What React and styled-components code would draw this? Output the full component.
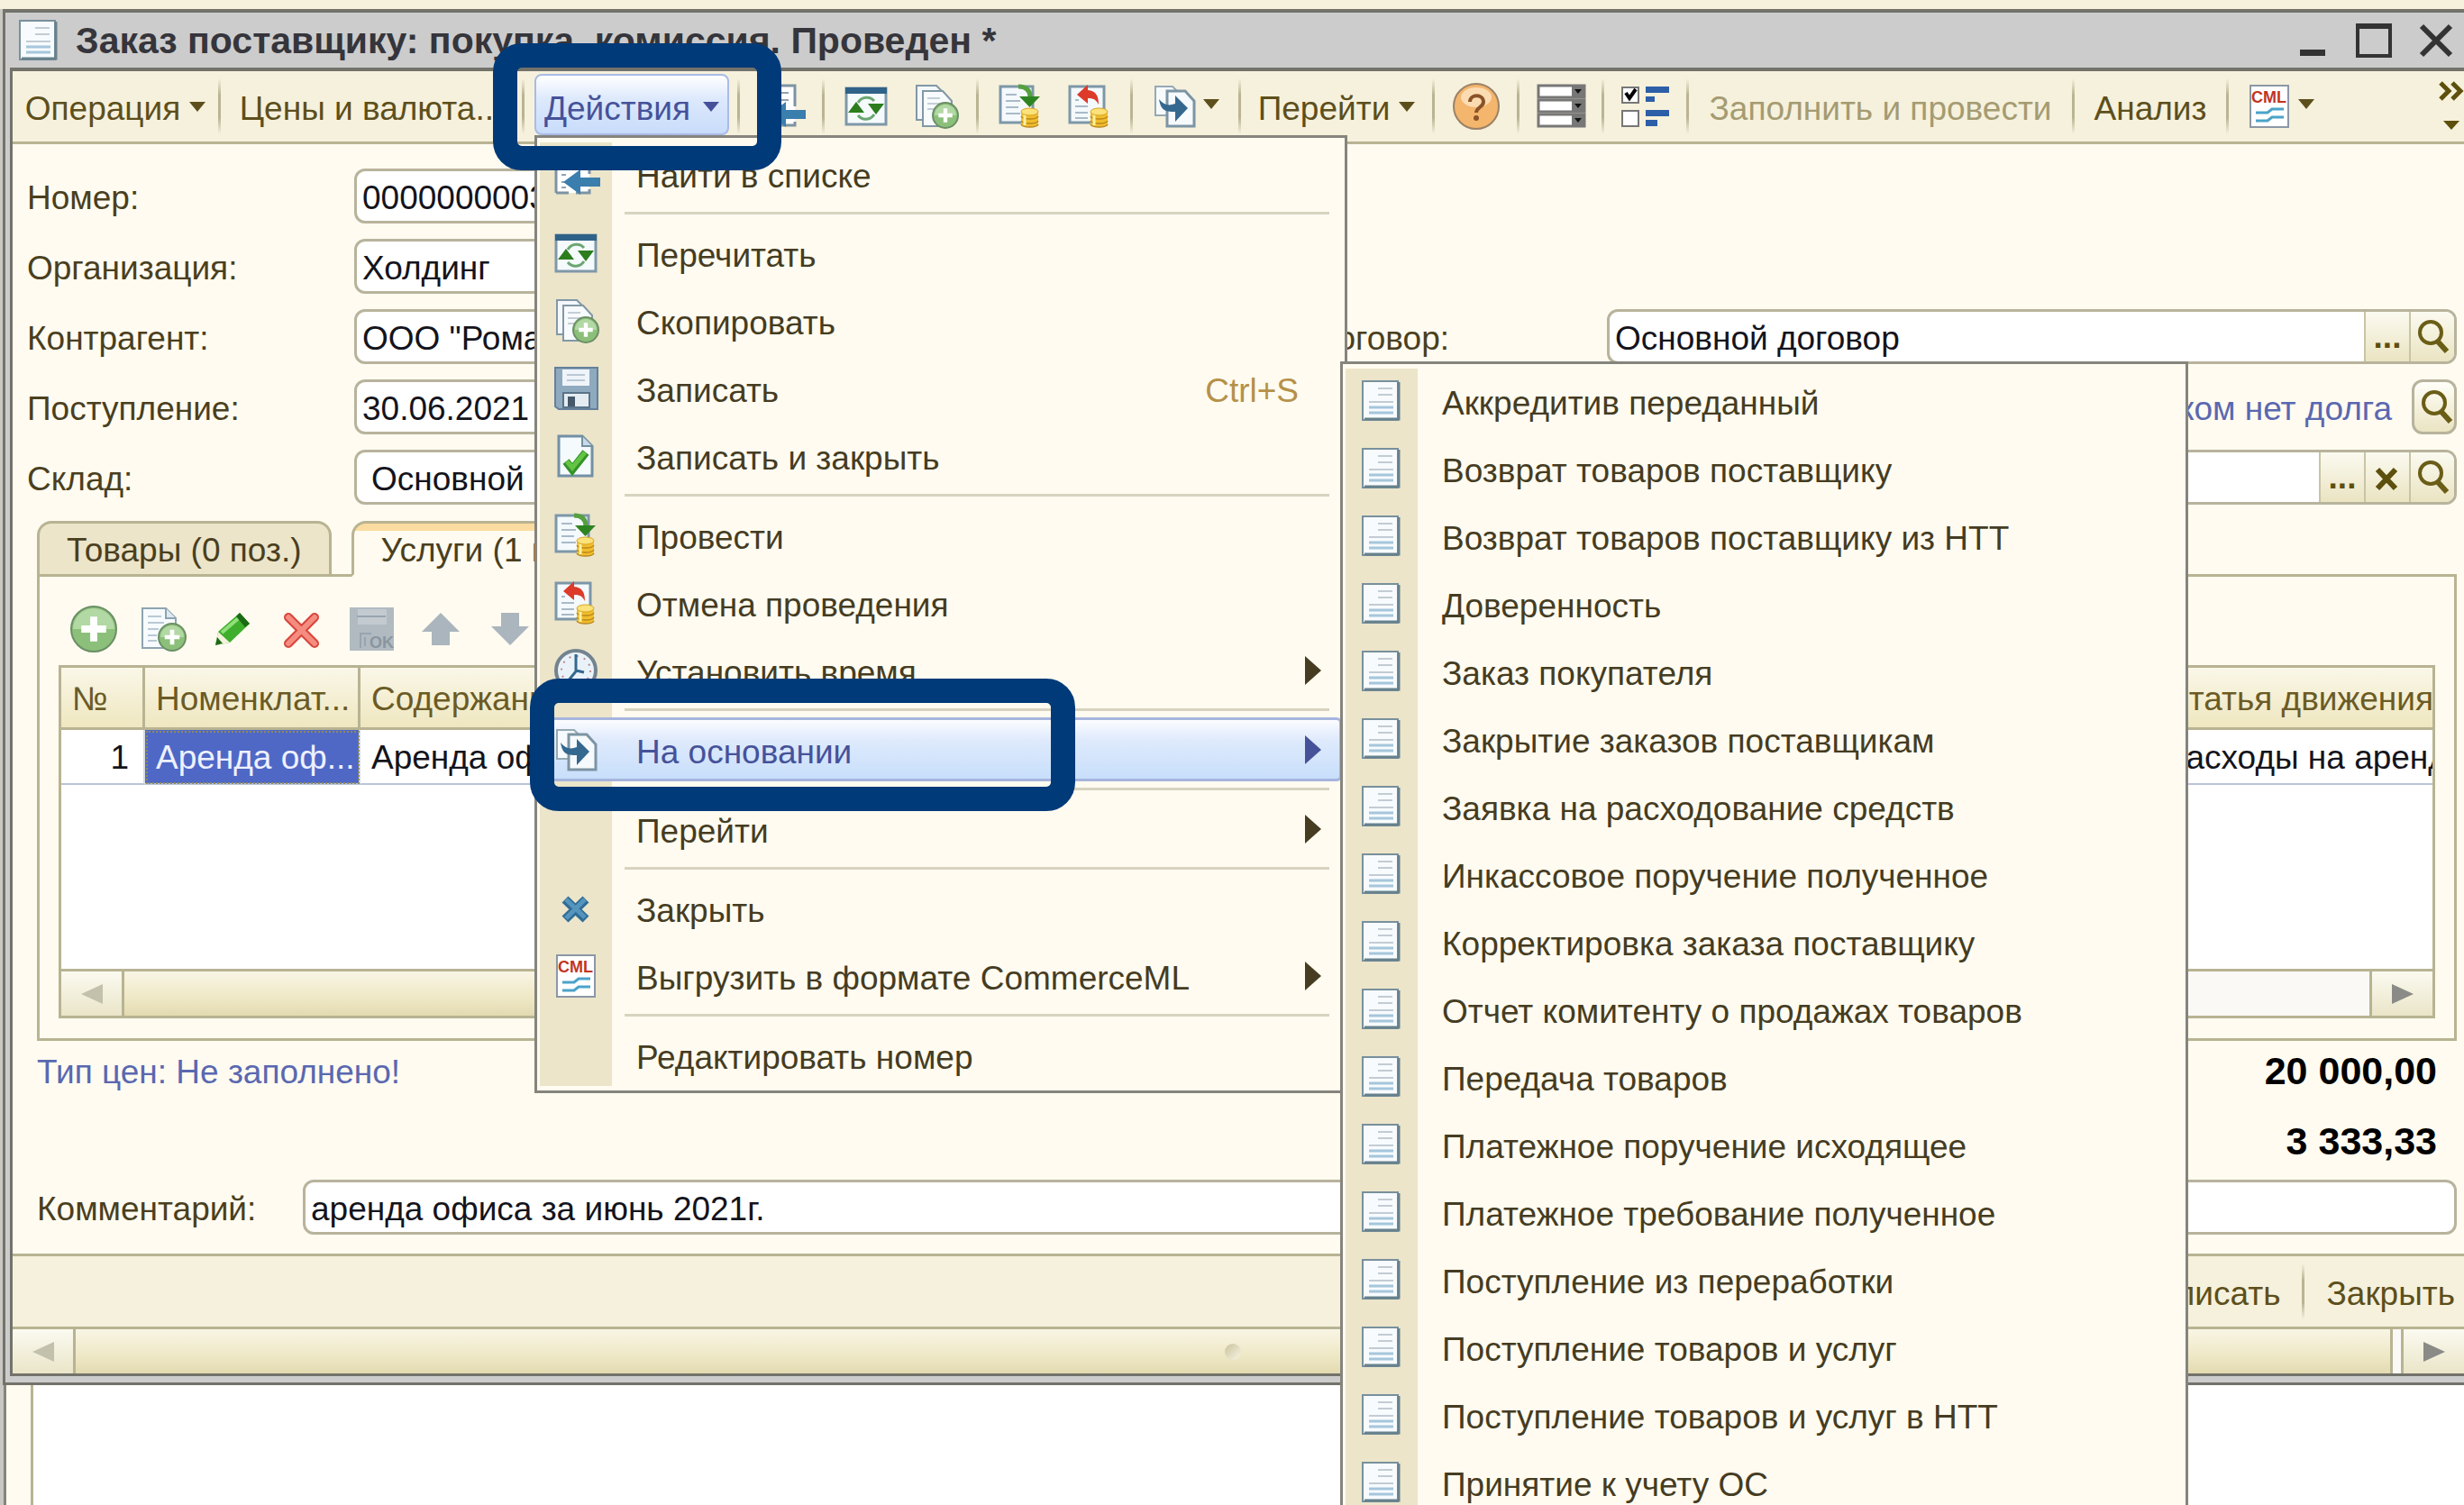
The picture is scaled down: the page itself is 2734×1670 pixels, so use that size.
import { Fragment, useId } from "react";
import { createGlobalStyle, styled } from "styled-components";

const menuItems = [
  { title: "Найти в списке", icon: "find" },
  { divider: true },
  { title: "Перечитать", icon: "refresh" },
  { title: "Скопировать", icon: "copy" },
  { title: "Записать", icon: "save", shortcut: "Ctrl+S" },
  { title: "Записать и закрыть", icon: "saveClose" },
  { divider: true },
  { title: "Провести", icon: "post" },
  { title: "Отмена проведения", icon: "unpost" },
  { title: "Установить время", icon: "clock", arrow: true },
  { divider: true },
  { title: "На основании", icon: "based", arrow: true, active: true },
  { divider: true },
  { title: "Перейти", arrow: true },
  { divider: true },
  { title: "Закрыть", icon: "close" },
  { title: "Выгрузить в формате CommerceML", icon: "cml", arrow: true },
  { divider: true },
  { title: "Редактировать номер" },
];

const documents = [
  "Аккредитив переданный",
  "Возврат товаров поставщику",
  "Возврат товаров поставщику из НТТ",
  "Доверенность",
  "Заказ покупателя",
  "Закрытие заказов поставщикам",
  "Заявка на расходование средств",
  "Инкассовое поручение полученное",
  "Корректировка заказа поставщику",
  "Отчет комитенту о продажах товаров",
  "Передача товаров",
  "Платежное поручение исходящее",
  "Платежное требование полученное",
  "Поступление из переработки",
  "Поступление товаров и услуг",
  "Поступление товаров и услуг в НТТ",
  "Принятие к учету ОС",
];

const rowTools = ["add", "addCopy", "edit", "remove", "saveRow", "up", "down"];

const Coins = () => (
  <g>
    <path d="M25 30v13c0 5 19 5 19 0V30z" fill="#f0bd2c" />
    <path d="M25 35c2 4 17 4 19 0M25 40c2 4 17 4 19 0M25 44c2 4 17 4 19 0" fill="none" stroke="#b9851a" strokeWidth="1.5" />
    <path d="M29 32v13" stroke="#fff0a0" strokeWidth="3" />
    <ellipse cx="34.500" cy="30" rx="9.500" ry="4" fill="#fbe27a" stroke="#d9a426" />
  </g>
);

const Plus = ({ cx, cy, r }) => (
  <g>
    <circle cx={cx} cy={cy} r={r} fill="#8cc07a" stroke="#6b8f66" strokeWidth="2" />
    <path d={`M${cx - r + 2} ${cy}a${r - 2} ${r - 2} 0 0 1 ${2 * r - 4} 0z`} fill="#b2d8a4" />
    <path d={`M${cx - r * 0.55} ${cy}h${r * 1.1}M${cx} ${cy - r * 0.55}v${r * 1.1}`} stroke="#fff" strokeWidth={r / 3.2} />
  </g>
);

const Sheet = () => (
  <g>
    <path d="M3 2h39v43H3z" fill="#f7fbfd" stroke="#78909c" strokeWidth="2" />
    <path d="M5 44h38V3" fill="none" stroke="#67818c" strokeWidth="3" />
    <path d="M20 10h16M20 17h16M10 25h27" stroke="#c3ccd4" strokeWidth="2" />
    <path d="M10 31h27M10 37h27" stroke="#a5c6dc" strokeWidth="3" />
  </g>
);

const glyphs = {
  sheet: <Sheet />,
  find: (
    <g>
      <path d="M2 1h37v44H2z" fill="#fff" />
      <path d="M2 45V1h37v23M2 45h14M24 45h15v-4" fill="none" stroke="#7d93a3" strokeWidth="3" />
      <path d="M8 9h5M18 9h14M8 17h5M18 17h14M8 25h5M8 33h3M8 39h5" stroke="#90a2b2" strokeWidth="2" />
      <path d="M51 28v10H29v9L10 33l19-14v9z" fill="#3a7eae" />
    </g>
  ),
  refresh: (
    <g>
      <path d="M2 4h44v40H2z" fill="#f5fafc" stroke="#7f98a9" strokeWidth="3" />
      <path d="M1 3h46v7H1z" fill="#2f6288" />
      <path d="M15 20a11 11 0 0 1 18-2M33 33a11 11 0 0 1-18 1" fill="none" stroke="#6ba673" strokeWidth="3" />
      <path d="M4 31l9-12 9 12zM26 21h18l-9 12z" fill="#2c7d1e" />
    </g>
  ),
  copy: (
    <g>
      <path d="M3 1h22l8 8v30H3z" fill="#f4f8fb" stroke="#8298a6" strokeWidth="2" />
      <path d="M10 7h22l10 11v28H10z" fill="#f8fbfd" stroke="#8298a6" strokeWidth="2" />
      <path d="M15 15h14M15 21h16M15 27h8" stroke="#c4ced7" strokeWidth="2" />
      <Plus cx={35} cy={34} r={14} />
    </g>
  ),
  save: (
    <g>
      <path d="M1 1h47v46H5l-4-3z" fill="#8fa9bf" stroke="#65809a" strokeWidth="2" />
      <path d="M9 3h30v18H9z" fill="#eef4f9" />
      <path d="M14 9h20M14 15h20" stroke="#b9c8d5" strokeWidth="2" />
      <path d="M10 29h29v16H10z" fill="#e4ecf2" stroke="#5a7389" strokeWidth="2" />
      <path d="M15 33h8v11h-8z" fill="#45586a" />
    </g>
  ),
  saveClose: (
    <g>
      <path d="M5 2h26l11 11v33H5z" fill="#f5fafd" stroke="#7390a3" strokeWidth="3" />
      <path d="M31 2v11h11" fill="#c9dae6" stroke="#7390a3" strokeWidth="2" />
      <path d="M13 30l7 9 15-19" fill="none" stroke="#34922a" strokeWidth="9" />
      <path d="M14 30l6 7 14-17" fill="none" stroke="#62c442" strokeWidth="5" />
    </g>
  ),
  post: (
    <g>
      <path d="M2 2h36v40H2z" fill="#f4f9fc" stroke="#7d97a8" strokeWidth="3" />
      <path d="M8 11h12M8 18h16M8 25h14M8 32h16" stroke="#a9bac8" strokeWidth="2" />
      <path d="M22 2c9 0 13 4 13 12" fill="none" stroke="#56a040" strokeWidth="5" />
      <path d="M23 13h23L34.500 25z" fill="#2f8422" />
      <Coins />
    </g>
  ),
  unpost: (
    <g>
      <path d="M2 2h38v40H2z" fill="#f4f9fc" stroke="#7d97a8" strokeWidth="3" />
      <path d="M8 17h4M8 24h14M8 31h14M8 37h14" stroke="#a9bac8" strokeWidth="2" />
      <path d="M10 11L22 0v6c9 1 12 6 12 16-3-6-6-7-12-7v6z" fill="#dd3a2a" />
      <Coins />
    </g>
  ),
  clock: (
    <g>
      <circle cx="24" cy="24" r="22" fill="#eaf2f9" stroke="#73838f" strokeWidth="4" />
      <circle cx="24" cy="24" r="16" fill="none" stroke="#b88" strokeWidth="2" strokeDasharray="2 6.400" />
      <path d="M24 6v19l-9 11M24 24l9 2" fill="none" stroke="#33688f" strokeWidth="3" />
    </g>
  ),
  based: (
    <g>
      <path d="M3 2h19l8 8v24H3z" fill="#f6fafc" stroke="#96a9b5" strokeWidth="2" />
      <path d="M16 7h20l10 11v28H16z" fill="#f6fafc" stroke="#7c94a3" strokeWidth="3" />
      <path d="M7 16c2 12 6 14 18 14v11l14-15-14-14v9c-8 3-13 1-18-5z" fill="#35688f" />
    </g>
  ),
  close: (
    <g>
      <path d="M12 14l23 22M35 14L12 36" stroke="#2f6d98" strokeWidth="10" />
      <path d="M13 14l21 20M34 14L13 35" stroke="#5595bd" strokeWidth="5" />
    </g>
  ),
  cml: (
    <g>
      <path d="M3 1h42v46H3z" fill="#fff" stroke="#8b98a5" strokeWidth="2" />
      <text x="4" y="20" fill="#c23420" fontFamily="Liberation Sans, sans-serif" fontSize="18" fontWeight="700">CML</text>
      <path d="M9 31h13l5-4h13M9 40h13l5-4h13" fill="none" stroke="#4ba3c9" strokeWidth="3" />
    </g>
  ),
  help: (
    <g>
      <circle cx="24" cy="24" r="25" fill="#f4b56d" stroke="#9b8266" strokeWidth="2" />
      <ellipse cx="24" cy="14" rx="17" ry="11" fill="#fbdcb2" />
      <path d="M17 19c0-9 15-9 15 0 0 6-8 6-8 12" fill="none" stroke="#8a5327" strokeWidth="4" />
      <circle cx="24" cy="37" r="3" fill="#8a5327" />
    </g>
  ),
  list: (
    <g>
      {[1, 17, 33].map(y => (
        <Fragment key={y}>
          <path d={`M-1 ${y}h51v13H-1z`} fill="#fff" stroke="#777" strokeWidth="3" />
          <path d={`M36 ${y}h14v13H36z`} fill="#777" />
          <path d={`M39 ${y + 4}h8l-4 5z`} fill="#111" />
        </Fragment>
      ))}
    </g>
  ),
  checks: (
    <g>
      <path d="M-2 3h18v17H-2zM-2 29h18v17H-2z" fill="#fff" stroke="#777" strokeWidth="2" />
      <path d="M2 9l4 6 7-10" fill="none" stroke="#000" strokeWidth="4" />
      <path d="M24 2h26v7H24zM24 13h10v6H24zM24 28h26v7H24zM24 39h13v7H24z" fill="#2d5fa8" />
    </g>
  ),
  add: <Plus cx={24} cy={24} r={25} />,
  addCopy: (
    <g>
      <path d="M1 1h26l11 11v33H1z" fill="#f7fbfd" stroke="#8fa4b1" strokeWidth="2" />
      <path d="M27 1v11h11" fill="#dfe9ef" stroke="#8fa4b1" strokeWidth="2" />
      <path d="M7 10h15M7 17h18M7 24h12M7 31h10M7 37h10" stroke="#b9c9d5" strokeWidth="2" />
      <Plus cx={34} cy={33} r={15} />
    </g>
  ),
  edit: (
    <g>
      <path d="M5 42l3-15L32 6l11 12-22 21z" fill="#3fae2c" />
      <path d="M12 28L33 10" stroke="#8fe07a" strokeWidth="4" />
      <path d="M8 27l13 12-16 3z" fill="#f4f2dd" />
      <path d="M5 42l2-9 6 7zM32 6l11 12-5 4L28 10z" fill="#1c6a16" />
    </g>
  ),
  remove: (
    <g>
      <path d="M9 11l29 29M38 11L9 40" stroke="#d8453c" strokeWidth="10" strokeLinecap="round" />
      <path d="M9 11l29 29M38 11L9 40" stroke="#f58c80" strokeWidth="6" strokeLinecap="round" />
    </g>
  ),
  saveRow: (
    <g>
      <path d="M0 0h49v48H0z" fill="#b1bac1" />
      <path d="M9 2h32v17H9z" fill="#c3cbd1" />
      <path d="M8 10h32M12 45V29h12M17 33v10" fill="none" stroke="#98a4ae" strokeWidth="2" />
      <text x="22" y="45" fill="#89969f" fontFamily="Liberation Sans, sans-serif" fontSize="18" fontWeight="700">OK</text>
    </g>
  ),
  up: <path d="M24 6l21 21H34v15H14V27H3z" fill="#aab5bd" />,
  down: <path d="M24 42l21-21H34V6H14v15H3z" fill="#aab5bd" />,
  search: (
    <g fill="none" stroke="#6a5d17">
      <circle cx="22" cy="19" r="12" strokeWidth="4" />
      <path d="M30 29l10 11" strokeWidth="6" />
    </g>
  ),
  cross: <path d="M13 15l20 21M33 15L13 36" stroke="#5d4f0c" strokeWidth="6" />,
  minimize: <path d="M10 34h28v7H10z" fill="#333" />,
  maximize: <path d="M6 7h36v34H6zM6 9h36" fill="none" stroke="#333" strokeWidth="4" />,
  shut: <path d="M9 8l32 32M41 8L9 40" stroke="#333" strokeWidth="6" />,
};

const Icon = ({ name }) => (
  <svg width="48" height="48" viewBox="0 0 48 48" aria-hidden="true">
    {glyphs[name]}
  </svg>
);

const DownMark = () => (
  <svg width="18" height="10" viewBox="0 0 18 10" aria-hidden="true">
    <path d="M0-3h18L9 8z" fill="currentColor" />
  </svg>
);

const SideMark = ({ left }) => (
  <svg width="24" height="22" viewBox="0 0 24 22" aria-hidden="true">
    <path d={left ? "M24 0v22L0 11z" : "M0 0l24 11L0 22z"} fill="currentColor" />
  </svg>
);

const Field = ({ title, value, inset, buttons = [] }) => {
  const id = useId();
  return (
    <FieldRow>
      <FieldLabel htmlFor={id}>{title}</FieldLabel>
      <InputBox>
        <Input id={id} defaultValue={value} $inset={inset} />
        {buttons.map(name => (
          <InputButton key={name} type="button" aria-label={name}>
            {name === "more" ? "..." : <Icon name={name} />}
          </InputButton>
        ))}
      </InputBox>
    </FieldRow>
  );
};

const DocumentsMenu = () => (
  <Submenu>
    {documents.map(title => (
      <MenuRow key={title}>
        <MenuButton type="button">
          <Icon name="sheet" />
          <MenuTitle>{title}</MenuTitle>
        </MenuButton>
      </MenuRow>
    ))}
  </Submenu>
);

const ActionsMenu = () => (
  <Menu>
    {menuItems.map((item, idx) =>
      item.divider ? (
        <Divider key={idx} />
      ) : (
        <MenuRow key={idx}>
          <MenuButton type="button" $active={item.active}>
            {item.icon ? <Icon name={item.icon} /> : <span />}
            <MenuTitle>{item.title}</MenuTitle>
            <Shortcut>{item.shortcut}</Shortcut>
            {item.arrow && (
              <svg width="18" height="32" viewBox="0 0 18 32" aria-hidden="true">
                <path d="M0 0l18 16L0 32z" fill="currentColor" />
              </svg>
            )}
          </MenuButton>
          {item.active && <DocumentsMenu />}
          {item.active && <ItemFrame />}
        </MenuRow>
      )
    )}
  </Menu>
);

const Toolbar = () => (
  <Bar>
    <ToolButton type="button" $width={228}>Операция <DownMark /></ToolButton>
    <Separator />
    <ToolButton type="button" $width={334}>Цены и валюта...</ToolButton>
    <Separator />
    <Dropdown>
      <OpenButton type="button" aria-expanded="true">Действия <DownMark /></OpenButton>
      <ActionsMenu />
      <ButtonFrame />
    </Dropdown>
    <Separator />
    <ToolGroup>
      <IconButton type="button" aria-label="Найти в списке"><Icon name="find" /></IconButton>
    </ToolGroup>
    <Separator />
    <ToolGroup>
      <IconButton type="button" aria-label="Перечитать"><Icon name="refresh" /></IconButton>
      <IconButton type="button" aria-label="Скопировать"><Icon name="copy" /></IconButton>
    </ToolGroup>
    <Separator />
    <ToolGroup>
      <IconButton type="button" aria-label="Провести"><Icon name="post" /></IconButton>
      <IconButton type="button" aria-label="Отмена проведения"><Icon name="unpost" /></IconButton>
    </ToolGroup>
    <Separator />
    <ToolButton type="button" $width={117} $gap={8} aria-label="На основании"><Icon name="based" /><DownMark /></ToolButton>
    <Separator />
    <ToolButton type="button" $width={212}>Перейти <DownMark /></ToolButton>
    <Separator />
    <ToolGroup>
      <IconButton type="button" aria-label="Справка"><Icon name="help" /></IconButton>
    </ToolGroup>
    <Separator />
    <ToolGroup>
      <IconButton type="button" aria-label="Структура"><Icon name="list" /></IconButton>
    </ToolGroup>
    <Separator />
    <ToolGroup>
      <IconButton type="button" aria-label="Настройка"><Icon name="checks" /></IconButton>
    </ToolGroup>
    <Separator />
    <ToolButton type="button" $width={425} disabled>Заполнить и провести</ToolButton>
    <Separator />
    <ToolButton type="button" $width={168}>Анализ</ToolButton>
    <Separator />
    <ToolButton type="button" $width={115} $gap={8} aria-label="CommerceML"><Icon name="cml" /><DownMark /></ToolButton>
    <MoreButton type="button" aria-label="Ещё">
      <svg width="28" height="58" viewBox="0 0 28 58" aria-hidden="true">
        <path d="M2 3l9 9-9 9M15 3l9 9-9 9" fill="none" stroke="#5d4f0c" strokeWidth="5" />
        <path d="M5 45h18l-9 10z" fill="#5d4f0c" />
      </svg>
    </MoreButton>
  </Bar>
);

const App = () => (
  <Screen>
    <GlobalStyle />
    <TopStrip />
    <Window>
      <TitleBar>
        <Icon name="sheet" />
        <Title>Заказ поставщику: покупка, комиссия. Проведен *</Title>
        <WindowButton type="button" aria-label="Свернуть"><Icon name="minimize" /></WindowButton>
        <WindowButton type="button" aria-label="Развернуть"><Icon name="maximize" /></WindowButton>
        <WindowButton type="button" aria-label="Закрыть окно"><Icon name="shut" /></WindowButton>
      </TitleBar>
      <Frame>
        <Toolbar />
        <Body>
          <FormGrid>
            <Column>
              <Field title="Номер:" value="00000000031" />
              <Field title="Организация:" value="Холдинг" buttons={["more", "search"]} />
              <Field title="Контрагент:" value={'ООО "Ромашка"'} buttons={["more", "search"]} />
              <Field title="Поступление:" value="30.06.2021" />
              <Field title="Склад:" value="Основной склад" inset buttons={["more", "search"]} />
            </Column>
            <Column>
              <Field title="Договор:" value="Основной договор" buttons={["more", "search"]} />
              <DebtRow>
                <DebtLink href="#debt">Перед поставщиком нет долга</DebtLink>
                <RoundButton type="button" aria-label="Показать долг"><Icon name="search" /></RoundButton>
              </DebtRow>
              <Field title="Сделка:" value="" buttons={["more", "cross", "search"]} />
            </Column>
          </FormGrid>

          <Lower>
            <Tabs role="tablist">
              <Tab type="button" role="tab">Товары (0 поз.)</Tab>
              <Tab type="button" role="tab" aria-selected="true" $selected>Услуги (1 поз.)</Tab>
            </Tabs>
            <Panel>
              <RowTools>
                {rowTools.map(name => (
                  <IconButton key={name} type="button" aria-label={name}><Icon name={name} /></IconButton>
                ))}
              </RowTools>
              <TableBox>
                <Table>
                  <colgroup>
                    <NumberCol />
                    <ItemCol />
                    <col />
                    <MovementCol />
                  </colgroup>
                  <thead>
                    <tr>
                      <th>№</th>
                      <th>Номенклат...</th>
                      <th>Содержание</th>
                      <th>Статья движения</th>
                    </tr>
                  </thead>
                  <tbody>
                    <tr>
                      <NumberCell>1</NumberCell>
                      <SelectedCell>Аренда оф...</SelectedCell>
                      <td>Аренда офиса</td>
                      <td>Расходы на аренду</td>
                    </tr>
                  </tbody>
                </Table>
                <ScrollBar>
                  <ScrollButton type="button" aria-label="Влево" disabled><SideMark left /></ScrollButton>
                  <Thumb $share={3} />
                  <Track $share={1} />
                  <ScrollButton type="button" aria-label="Вправо"><SideMark /></ScrollButton>
                </ScrollBar>
              </TableBox>
            </Panel>
            <Summary>
              <PriceType>Тип цен: Не заполнено!</PriceType>
              <Totals>
                <output>20 000,00</output>
                <output>3 333,33</output>
              </Totals>
            </Summary>
            <CommentRow>
              <FieldLabel htmlFor="comment">Комментарий:</FieldLabel>
              <InputBox>
                <Input id="comment" defaultValue="аренда офиса за июнь 2021г." />
              </InputBox>
            </CommentRow>
          </Lower>
        </Body>
        <Footer>
          <FooterButton type="button">Записать</FooterButton>
          <Separator />
          <FooterButton type="button">Закрыть</FooterButton>
        </Footer>
        <ScrollBar>
          <ScrollButton type="button" aria-label="Влево" disabled><SideMark left /></ScrollButton>
          <Thumb $share={1}><Grip /></Thumb>
          <Gap />
          <ScrollButton type="button" aria-label="Вправо"><SideMark /></ScrollButton>
        </ScrollBar>
      </Frame>
    </Window>
    <Desktop>
      <DesktopPage />
    </Desktop>
  </Screen>
);

export default App;

const GlobalStyle = createGlobalStyle`
  * {
    box-sizing: border-box;
  }

  body {
    margin: 0;
  }

  body, button, input {
    font-family: "Liberation Sans", Arial, sans-serif;
    font-size: 37px;
    color: #4a3f1e;
  }

  button {
    padding: 0;
    border: 0;
    background: none;
    white-space: nowrap;
  }

  svg {
    flex: none;
    display: block;
    overflow: visible;
  }
`;

const Screen = styled.div`
  display: flex;
  flex-direction: column;
  height: 100vh;
  overflow: hidden;
  background: #c9c8c2;
`;

const TopStrip = styled.div`
  flex: none;
  height: 10px;
  background: #f5f1dc;
`;

const Window = styled.main`
  flex: none;
  margin-left: 3px;
  padding: 0 0 7px 5px;
  border: solid #73726b;
  border-width: 4px 0 3px 3px;
  background: #cccccc;
`;

const TitleBar = styled.header`
  display: flex;
  align-items: center;
  height: 61px;
  padding: 0 8px 0 8px;
`;

const Title = styled.h1`
  flex: 1;
  margin: 0 0 0 17px;
  padding-top: 2px;
  font-size: 41px;
  font-weight: 700;
  color: #35353b;
  white-space: nowrap;
`;

const WindowButton = styled.button`
  width: 48px;
  margin-left: 20px;
`;

const Frame = styled.div`
  border: solid #73726b;
  border-width: 4px 0 3px 3px;
  background: #fffbf0;
`;

const Bar = styled.nav`
  display: flex;
  align-items: center;
  height: 81px;
  border-bottom: 3px solid #b8b392;
  background: #f6f1dc;
`;

const Separator = styled.span`
  flex: none;
  width: 3px;
  height: 62px;
  background: linear-gradient(#f6f1dc, #bab493 30%, #bab493 70%, #f6f1dc);
`;

const ToolButton = styled.button`
  display: flex;
  flex: none;
  align-items: center;
  justify-content: center;
  gap: ${props => props.$gap ?? 10}px;
  width: ${props => props.$width}px;
  height: 72px;
  padding-top: ${props => (props.$gap ? 0 : 6)}px;
  color: #5d4f1c;

  &:disabled {
    color: #a59b72;
  }
`;

const ToolGroup = styled.div`
  display: flex;
  flex: none;
  padding: 0 7px;
`;

const IconButton = styled.button`
  display: flex;
  align-items: center;
  justify-content: center;
  width: 77px;
  height: 72px;
`;

const Dropdown = styled.div`
  position: relative;
  flex: none;
  align-self: stretch;
  width: 216px;
  margin: 0 9px 0 11px;
`;

const OpenButton = styled.button`
  display: flex;
  align-items: center;
  justify-content: center;
  gap: 14px;
  width: 100%;
  height: 68px;
  margin-top: 3px;
  padding-top: 9px;
  border: 2px solid #a9bbe6;
  border-radius: 8px;
  background: linear-gradient(#ffffff, #dde9fc 40%, #c8dcfa);
  color: #45529a;
`;

const MoreButton = styled.button`
  margin-left: auto;
  width: 28px;
`;

const Menu = styled.ul`
  position: absolute;
  z-index: 5;
  top: 71px;
  left: 0;
  width: 902px;
  margin: 0;
  padding: 2px 3px;
  border: 3px solid #85847d;
  background: linear-gradient(#ece5ca, #ece5ca) 3px 5px / 80px calc(100% - 10px) no-repeat #fffbf0;
  list-style: none;
`;

const Submenu = styled(Menu)`
  top: -393px;
  left: 888px;
  width: 941px;
  padding-top: 3px;
`;

const MenuRow = styled.li`
  position: relative;
  height: 75px;
  padding: 2px 0;
`;

const MenuButton = styled.button`
  display: grid;
  grid-template-columns: 80px 1fr auto 18px;
  align-items: center;
  width: 100%;
  height: 71px;
  padding-right: 23px;
  border-radius: 6px;
  text-align: left;
  color: ${props => (props.$active ? "#45529a" : "#453c22")};
  background: ${props => (props.$active ? "linear-gradient(#ffffff, #dfeafc 35%, #c6defb)" : "none")};
  box-shadow: ${props => (props.$active ? "inset 0 0 0 3px #a6b5de" : "none")};

  > :first-child {
    justify-self: center;
  }
`;

const MenuTitle = styled.span`
  padding: 7px 0 0 27px;
`;

const Shortcut = styled.kbd`
  padding: 7px 7px 0 0;
  font-family: inherit;
  color: #b5914a;
`;

const Divider = styled.li`
  height: 13px;
  margin: 0 14px 0 94px;
  border: solid transparent;
  border-width: 5px 0;
  background: #d8d3c0;
  background-clip: padding-box;
`;

const Highlight = styled.div`
  position: absolute;
  z-index: 10;
  border: 27px solid #003a78;
  border-radius: 32px;
  pointer-events: none;
`;

const ButtonFrame = styled(Highlight)`
  top: -31px;
  left: -46px;
  width: 320px;
  height: 141px;
`;

const ItemFrame = styled(Highlight)`
  top: -41px;
  left: -11px;
  width: 605px;
  height: 147px;
`;

const Body = styled.div`
  padding: 27px 8px 21px 16px;
`;

const FormGrid = styled.div`
  display: grid;
  grid-template-columns: minmax(0, 1fr) minmax(0, 1fr);
  column-gap: 160px;
`;

const Column = styled.div`
  display: flex;
  flex-direction: column;
  justify-content: flex-end;
  gap: 17px;
`;

const FieldRow = styled.div`
  display: grid;
  grid-template-columns: 363px minmax(0, 1fr);
  height: 61px;

  ${Column}:last-child > & {
    grid-template-columns: 325px minmax(0, 1fr);
  }
`;

const FieldLabel = styled.label`
  align-self: center;
  padding-top: 4px;
`;

const InputBox = styled.div`
  display: flex;
  height: 61px;
  overflow: hidden;
  border: 3px solid #b8b39c;
  border-radius: 12px;
  background: #ffffff;
`;

const Input = styled.input`
  flex: 1;
  min-width: 0;
  padding: 4px 0 0 ${props => (props.$inset ? 16 : 6)}px;
  border: 0;
  background: none;
  color: #14141c;
  outline: none;
`;

const InputButton = styled.button`
  flex: none;
  width: 50px;
  border-left: 2px solid #c9c4a4;
  background: linear-gradient(#fbfaf0, #eae4c2);
  color: #5d4f0c;
  font-weight: 700;
`;

const DebtRow = styled.div`
  display: flex;
  align-items: center;
  justify-content: flex-end;
  gap: 22px;
  height: 61px;
`;

const DebtLink = styled.a`
  padding-top: 4px;
  color: #5a68b0;
  text-decoration: none;
`;

const RoundButton = styled.button`
  width: 50px;
  height: 61px;
  border: 3px solid #b8b39c;
  border-radius: 12px;
  background: linear-gradient(#fffef8, #eae4c2);
`;

const Lower = styled.section`
  margin: 18px 0 0 11px;
`;

const Tabs = styled.div`
  display: flex;
  gap: 22px;
`;

const Tab = styled.button`
  height: 62px;
  margin-bottom: -3px;
  padding: 3px 30px 0;
  border: 3px solid #b8b392;
  border-bottom-color: ${props => (props.$selected ? "#fffbf0" : "#b8b392")};
  border-radius: 16px 16px 0 0;
  background: ${props => (props.$selected ? "linear-gradient(#fbdca0 8px, #fffbf0 8px)" : "#ece5ca")};
  position: relative;
`;

const Panel = styled.div`
  padding: 0 21px 22px;
  border: 3px solid #b8b392;
`;

const RowTools = styled.div`
  display: flex;
  align-items: center;
  height: 98px;
  padding-top: 18px;
`;

const TableBox = styled.div`
  display: flex;
  flex-direction: column;
  min-height: 392px;
  border: 3px solid #b8b392;
  background: #ffffff;
`;

const Table = styled.table`
  width: 100%;
  margin-bottom: auto;
  table-layout: fixed;
  border-collapse: separate;
  border-spacing: 0;

  th, td {
    overflow: hidden;
    padding: 3px 0 0 12px;
    font-weight: 400;
    text-align: left;
    white-space: nowrap;
  }

  th {
    height: 69px;
    border-right: 3px solid #b8b392;
    border-bottom: 3px solid #b8b392;
    background: linear-gradient(#faf7e8, #efe7c0);
    color: #6b5b25;
  }

  td {
    height: 61px;
    border-right: 2px solid #d5dce6;
    border-bottom: 2px solid #b9c5da;
    color: #14141c;
  }

  th:last-child, td:last-child {
    border-right: 0;
  }
`;

const NumberCol = styled.col`
  width: 93px;
`;

const ItemCol = styled.col`
  width: 239px;
`;

const MovementCol = styled.col`
  width: 309px;
`;

const NumberCell = styled.td`
  && {
    padding-right: 16px;
    text-align: right;
  }
`;

const SelectedCell = styled.td`
  && {
    background: #4f68c6;
    color: #eef1ff;
    outline: 2px dotted #8f8a5c;
    outline-offset: -3px;
  }
`;

const ScrollBar = styled.div`
  display: flex;
  height: 52px;
  border-top: 3px solid #b8b392;
  background: #faf9f5;
`;

const ScrollButton = styled.button`
  display: flex;
  flex: none;
  align-items: center;
  justify-content: center;
  width: 67px;
  background: linear-gradient(#fbfaf0, #eae5c8);
  color: #8a8a86;

  &:disabled {
    color: #c3c0ac;
  }
`;

const Thumb = styled.div`
  display: flex;
  flex: ${props => props.$share};
  align-items: center;
  justify-content: center;
  border: solid #b8b392;
  border-width: 0 3px;
  background: linear-gradient(#f8f5e4, #efe8c6 60%, #e2dab0);
`;

const Track = styled.div`
  flex: ${props => props.$share};
  border-right: 3px solid #b8b392;
`;

const Gap = styled.div`
  width: 12px;
  border-right: 3px solid #b8b392;
`;

const Grip = styled.span`
  width: 18px;
  height: 18px;
  border-radius: 50%;
  background: linear-gradient(135deg, #c9c29c, #f8f5e4);
`;

const Summary = styled.div`
  display: flex;
  align-items: flex-start;
  justify-content: space-between;
  padding: 0 22px 10px 0;
  line-height: 70px;
`;

const PriceType = styled.span`
  color: #5a68b0;
`;

const Totals = styled.div`
  display: grid;
  gap: 12px;
  text-align: right;
  font-size: 43px;
  font-weight: 700;
  line-height: 66px;
  color: #000000;
`;

const CommentRow = styled.div`
  display: grid;
  grid-template-columns: 295px minmax(0, 1fr);
`;

const Footer = styled.footer`
  display: flex;
  align-items: center;
  justify-content: flex-end;
  height: 81px;
  border-top: 3px solid #b8b392;
  background: #f5f1dc;
`;

const FooterButton = styled.button`
  height: 72px;
  padding: 6px 10px 0 24px;
  color: #5d4f1c;

  &:first-child {
    padding-right: 24px;
  }
`;

const Desktop = styled.div`
  flex: 1;
  margin-left: 4px;
  padding-left: 27px;
  border-left: 3px solid #85847d;
  background: #fffbf0;
`;

const DesktopPage = styled.div`
  height: 100%;
  border-left: 3px solid #b8b392;
  background: #ffffff;
`;
